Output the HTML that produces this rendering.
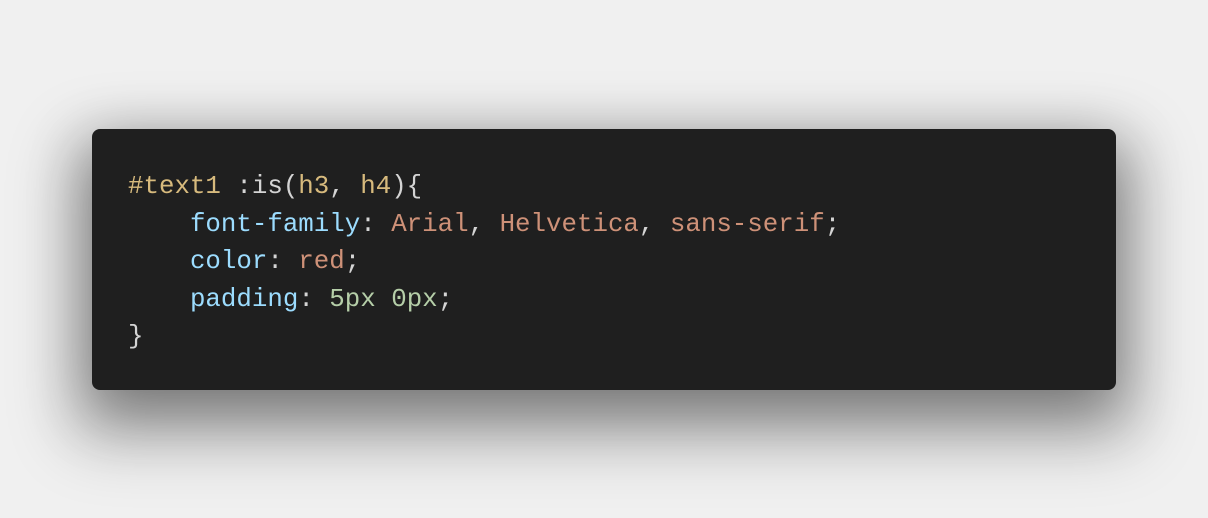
<!DOCTYPE html>
<html><head><style>
html,body{margin:0;padding:0;}
body{width:1208px;height:518px;background:#f0f0f0;position:relative;overflow:hidden;}
.box{position:absolute;left:92px;top:129px;width:1024px;height:261px;background:#1f1f1f;border-radius:8px;box-shadow:0 20px 60px rgba(0,0,0,0.4),0 30px 64px 24px rgba(0,0,0,0.22);}
pre{position:absolute;left:36px;top:39px;margin:0;font-family:"Liberation Mono",monospace;font-size:25.8px;line-height:37.5px;color:#d4d4d4;}
.y{color:#d7ba7d}.b{color:#9cdcfe}.o{color:#ce9178}.g{color:#b5cea8}
</style></head><body>
<div class="box"><pre><span class="y">#text1</span> :is(<span class="y">h3</span>, <span class="y">h4</span>){
    <span class="b">font-family</span>: <span class="o">Arial</span>, <span class="o">Helvetica</span>, <span class="o">sans-serif</span>;
    <span class="b">color</span>: <span class="o">red</span>;
    <span class="b">padding</span>: <span class="g">5px</span> <span class="g">0px</span>;
}</pre></div>
</body></html>
